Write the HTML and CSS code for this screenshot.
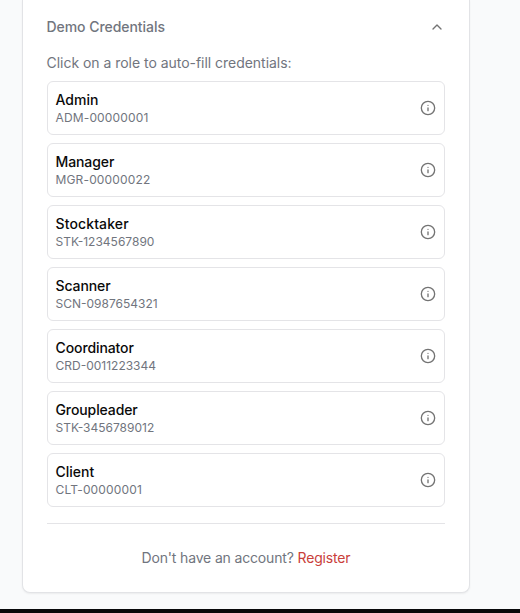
FILE: index.html
```html
<!DOCTYPE html>
<html lang="en">
<head>
<meta charset="utf-8">
<title>Sign in</title>
<link rel="stylesheet" href="styles.css">
</head>
<body>
<svg class="symbols" aria-hidden="true">
  <symbol id="info" viewBox="0 0 24 24"><circle cx="12" cy="12" r="10"/><path d="M12 16v-4M12 8h.01"/></symbol>
</svg>
<main class="card">
  <button class="toggle"><span>Demo Credentials</span>
    <svg class="icon" viewBox="0 0 24 24"><path d="m18 15-6-6-6 6"/></svg>
  </button>
  <p class="hint">Click on a role to auto-fill credentials:</p>
  <div class="roles">
    <button class="role"><span class="label"><b>Admin</b><small class="wide">ADM-00000001</small></span><svg class="icon"><use href="#info"/></svg></button>
    <button class="role"><span class="label"><b class="tight">Manager</b><small class="wide">MGR-00000022</small></span><svg class="icon"><use href="#info"/></svg></button>
    <button class="role"><span class="label"><b class="loose">Stocktaker</b><small>STK-1234567890</small></span><svg class="icon"><use href="#info"/></svg></button>
    <button class="role"><span class="label"><b class="tight">Scanner</b><small>SCN-0987654321</small></span><svg class="icon"><use href="#info"/></svg></button>
    <button class="role"><span class="label"><b class="tight">Coordinator</b><small>CRD-0011223344</small></span><svg class="icon"><use href="#info"/></svg></button>
    <button class="role"><span class="label"><b class="tight">Groupleader</b><small>STK-3456789012</small></span><svg class="icon"><use href="#info"/></svg></button>
    <button class="role"><span class="label"><b>Client</b><small class="wide">CLT-00000001</small></span><svg class="icon"><use href="#info"/></svg></button>
  </div>
  <p class="signup">Don't have an account? <a href="#">Register</a></p>
</main>
<footer class="bar"></footer>
</body>
</html>
```
FILE: styles.css
```css
* { box-sizing: border-box; }
body {
  margin: 0;
  height: 613px;
  overflow: hidden;
  display: flex;
  flex-direction: column;
  background: #f9fafb;
  color: #0a0a0a;
  font: 14px/20px Inter, sans-serif;
}
.symbols { position: absolute; width: 0; height: 0; }
.card {
  width: 448px;
  height: 593px;
  margin-left: 22px;
  padding: 17px 24px 0;
  background: #fff;
  border: 1px solid #e2e3e6;
  border-top: 0;
  border-radius: 0 0 8px 8px;
  box-shadow: 0 1px 2px rgb(0 0 0 / 6%);
}
button {
  display: flex;
  align-items: center;
  justify-content: space-between;
  width: 100%;
  margin: 0;
  padding: 0;
  border: 0;
  background: none;
  color: inherit;
  font: inherit;
  text-align: left;
}
.icon {
  width: 16px;
  height: 16px;
  flex: none;
  fill: none;
  stroke: #737373;
  stroke-width: 2;
  stroke-linecap: round;
  stroke-linejoin: round;
}
.toggle { height: 20px; color: #71757e; font-weight: 500; letter-spacing: -.05px; }
.toggle span { margin-left: -.5px; }
.hint { margin: 16px 0 8px -.5px; color: #71757e; letter-spacing: -.03px; }
.roles { display: flex; flex-direction: column; gap: 8px; }
.role {
  height: 54px;
  padding: 8px;
  border: 1px solid #e4e4e7;
  border-radius: 6px;
}
.label { display: flex; flex-direction: column; margin-left: -.5px; }
b { font-weight: 500; }
small { color: #71757e; font-size: 12px; line-height: 16px; }
.wide { letter-spacing: .15px; }
.tight { letter-spacing: -.1px; }
.loose { letter-spacing: .12px; }
.signup {
  margin: 16px 0 0;
  padding-top: 24px;
  border-top: 1px solid #e4e4e7;
  color: #71757e;
  text-align: center;
  letter-spacing: -.16px;
}
.signup a { color: #c9403a; text-decoration: none; }
.bar { margin-top: auto; height: 4px; background: #09090b; }
```
